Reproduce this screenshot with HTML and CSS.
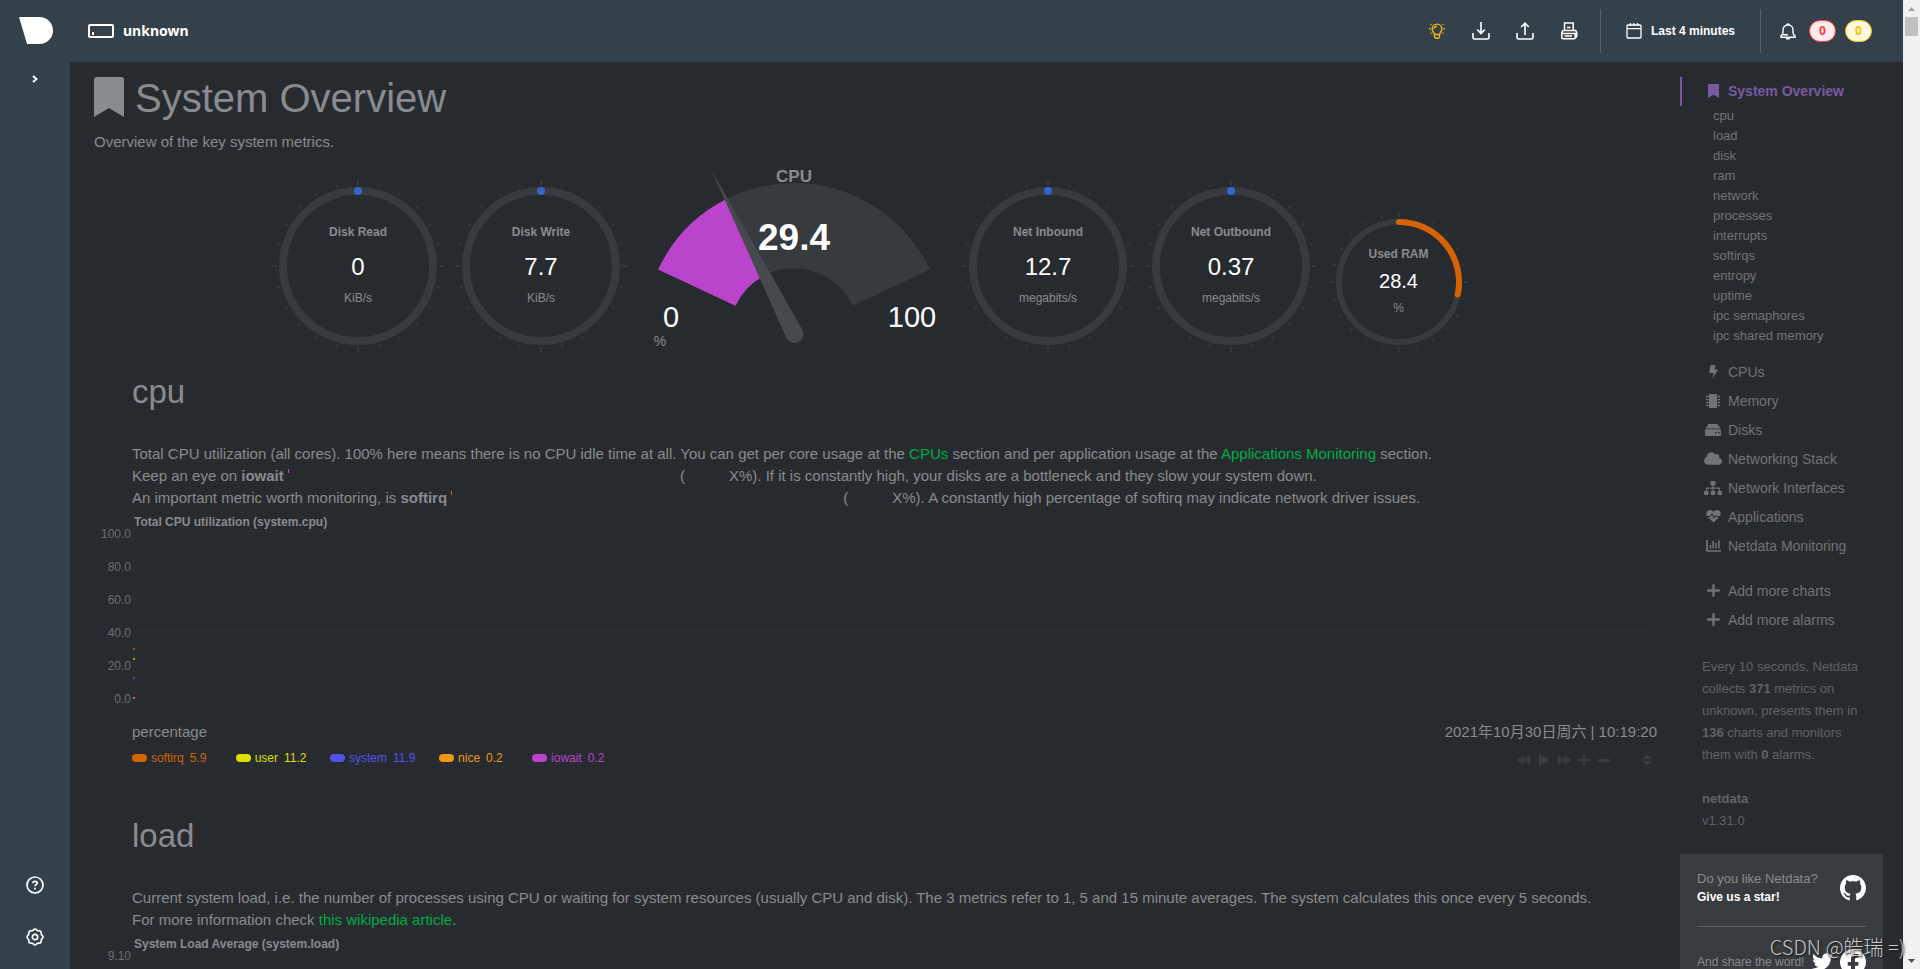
FILE: index.html
```html
<!DOCTYPE html>
<html lang="en">
<head>
<meta charset="utf-8">
<title>unknown netdata dashboard</title>
<link rel="stylesheet" href="styles.css">
</head>
<body>
<svg class="defs" width="0" height="0" aria-hidden="true">
  <defs>
    <symbol id="bookmark" viewBox="0 0 30 40"><path d="M3 0h24a3 3 0 0 1 3 3v37l-15-9-15 9V3a3 3 0 0 1 3-3z"/></symbol>
    <symbol id="plus" viewBox="0 0 448 448"><path d="M416 184H264V32c0-18-14-32-32-32h-16c-18 0-32 14-32 32v152H32c-18 0-32 14-32 32v16c0 18 14 32 32 32h152v152c0 18 14 32 32 32h16c18 0 32-14 32-32V264h152c18 0 32-14 32-32v-16c0-18-14-32-32-32z"/></symbol>
    <symbol id="ring" viewBox="0 0 172 172">
      <circle cx="86" cy="86" r="75" fill="none" stroke="#373a3f" stroke-width="8"/>
      <circle cx="86" cy="86" r="83" fill="none" stroke="#373b3f" stroke-width="3" pathLength="240" stroke-dasharray="0.7 9.3" stroke-dashoffset="0.35"/>
      <path d="M86 0v5M86 167v5M0 86h5M167 86h5" stroke="#373b3f" stroke-width="1.500"/>
      <circle cx="86" cy="11" r="4" fill="#3366cc"/>
    </symbol>
  </defs>
</svg>
<div class="app">
  <nav class="rail" aria-label="Workspace">
    <a class="logo" href="#" aria-label="Netdata"><svg width="34" height="27" viewBox="0 0 34 27"><path fill="#fff" d="M0 0h20.500a13.500 13.500 0 0 1 0 27H8z"/></svg></a>
    <button class="icon-btn expand" aria-label="Expand"><svg width="6" height="8" viewBox="0 0 6 8"><path d="M1 1l3.500 3L1 7" fill="none" stroke="#fff" stroke-width="2"/></svg></button>
    <div class="rail-bottom">
      <button class="icon-btn" aria-label="Help"><svg width="18" height="18" viewBox="0 0 18 18" fill="none" stroke="#fff" stroke-width="1.700"><circle cx="9" cy="9" r="8"/><path d="M6.800 7.200C7 5.800 8 5.300 9 5.300s2.200.6 2.200 1.900C11.200 8.600 9 8.700 9 10.300M9 11.800v1.600"/></svg></button>
      <button class="icon-btn" aria-label="Settings"><svg width="18" height="18" viewBox="0 0 18 18" fill="none" stroke="#fff" stroke-width="1.700"><path d="M9 1c1.300 0 1.600 1.400 2.700 1.700 1 .3 2.100-.4 3 .6.900.9.200 2 .6 3C15.600 7.400 17 7.700 17 9s-1.400 1.600-1.700 2.700c-.4 1 .3 2.100-.6 3-.9.900-2 .2-3 .6C10.600 15.600 10.300 17 9 17s-1.600-1.400-2.700-1.700c-1-.4-2.100.3-3-.6-.9-.9-.2-2-.6-3C2.400 10.600 1 10.300 1 9s1.400-1.600 1.700-2.700c.4-1-.3-2.100.6-3 .9-1 2-.3 3-.6C7.400 2.400 7.700 1 9 1z"/><circle cx="9" cy="9" r="2.700"/></svg></button>
    </div>
  </nav>
  <div class="stage">
    <header class="topbar">
      <div class="host"><svg width="26" height="14" viewBox="0 0 26 14"><rect x="1" y="1" width="24" height="12" rx="1" fill="none" stroke="#fff" stroke-width="2"/><path d="M4 8h2v3H4z" fill="#fff"/></svg><span>unknown</span></div>
      <div class="tools">
        <button class="icon-btn" aria-label="News"><svg width="18" height="18" viewBox="0 0 18 18" fill="none" stroke="#f0b80c" stroke-width="1.400"><path d="M6.500 12.500C6.500 11 4.200 10 4.200 6.900a4.800 4.800 0 0 1 9.600 0c0 3.100-2.300 4.100-2.300 5.600z"/><path d="M6.500 12.500v2.300l1 1.500h3l1-1.500v-2.300M6.300 6.800c0-1.500 1-2.500 2.500-2.600M2.500 2l1 .8M15.500 2l-1 .8M1 6.800h1.500M15.500 6.800H17M2.500 11.500l1-.8M15.500 11.500l-1-.8"/></svg></button>
        <button class="icon-btn" aria-label="Import"><svg width="18" height="18" viewBox="0 0 18 18" fill="none" stroke="#fff" stroke-width="1.600"><path d="M9 0v11M5.200 7.500L9 11.500l3.800-4M1 11v4.500A1.500 1.500 0 0 0 2.500 17h13a1.500 1.500 0 0 0 1.500-1.500V11"/></svg></button>
        <button class="icon-btn" aria-label="Export"><svg width="18" height="18" viewBox="0 0 18 18" fill="none" stroke="#fff" stroke-width="1.600"><path d="M9 13V1.500M5.200 5L9 1.200 12.800 5M1 11v4.500A1.500 1.500 0 0 0 2.500 17h13a1.500 1.500 0 0 0 1.500-1.500V11"/></svg></button>
        <button class="icon-btn" aria-label="Print"><svg width="18" height="18" viewBox="0 0 18 18" fill="none" stroke="#fff" stroke-width="1.500"><path d="M4.500 8.500V1h8.700v7.500zM7 5.500h3.500M4.500 8.500H3L1.800 10.500v5.300a1 1 0 0 0 1 1h11.400a1 1 0 0 0 1-1v-4.300H1.800M4.500 14h7.500M13.200 8.500h2.500l1 2v4l-1.500 1.500"/></svg></button>
      </div>
      <button class="range"><svg width="16" height="16" viewBox="0 0 16 16" fill="none" stroke="#fff" stroke-width="1.300"><rect x="1" y="2" width="14" height="13" rx="1"/><path d="M1 5.700h14M4.500 0v3M8 0v3M11.500 0v3"/></svg><span>Last 4 minutes</span></button>
      <div class="alarms">
        <button class="icon-btn" aria-label="Alarms"><svg width="16" height="17" viewBox="0 0 16 17" fill="none" stroke="#fff" stroke-width="1.400"><path d="M1 14.300v-1.500c1.300-.8 2-1.500 2-3.300V7c0-2.700 2-5 5-5s5 2.300 5 5v2.500c0 1.800.7 2.500 2 3.300v1.500zM6.500 2.200C6.500.600 9.500.600 9.500 2.200M6 14.500c.5 2 3.500 2 4 0M3 11.700h5"/></svg></button>
        <button class="pill critical">0</button>
        <button class="pill warning">0</button>
      </div>
    </header>
    <div class="body">
      <main class="content">
        <h1><svg width="30" height="40"><use href="#bookmark"/></svg>System Overview</h1>
        <p class="lead">Overview of the key system metrics.</p>
        <div class="gauges">
          <div class="pie"><svg viewBox="0 0 172 172"><use href="#ring"/></svg><b>Disk Read</b><span class="num">0</span><span class="unit">KiB/s</span></div>
          <div class="pie"><svg viewBox="0 0 172 172"><use href="#ring"/></svg><b>Disk Write</b><span class="num">7.7</span><span class="unit">KiB/s</span></div>
          <div class="cpu-gauge">
            <svg width="324" height="198" viewBox="1 0 324 198">
              <path fill="#373a3e" d="M26.100 115.600A150 150 0 0 1 297.900 115.600L220.500 151.700A64.500 64.500 0 0 0 103.500 151.700Z"/>
              <path fill="#bb44cc" d="M26.100 115.600A150 150 0 0 1 94.400 45.100L132.900 121.400A64.500 64.500 0 0 0 103.500 151.700Z"/>
              <path fill="#464a4e" d="M79.200 15.800L170 175a9 9 0 1 1-16 8z"/>
              <g font-family="Liberation Sans, Arial, sans-serif" text-anchor="middle">
                <text x="162" y="28" font-size="17" font-weight="bold" fill="#888b8f">CPU</text>
                <text x="162" y="96" font-size="37" font-weight="bold" fill="#fff">29.4</text>
                <text x="39" y="173" font-size="29" fill="#fff">0</text>
                <text x="280" y="173" font-size="29" fill="#fff">100</text>
                <text x="28" y="192" font-size="14" fill="#888b8f">%</text>
              </g>
            </svg>
          </div>
          <div class="pie"><svg viewBox="0 0 172 172"><use href="#ring"/></svg><b>Net Inbound</b><span class="num">12.7</span><span class="unit">megabits/s</span></div>
          <div class="pie"><svg viewBox="0 0 172 172"><use href="#ring"/></svg><b>Net Outbound</b><span class="num">0.37</span><span class="unit">megabits/s</span></div>
          <div class="pie small">
            <svg viewBox="0 0 140 140"><circle cx="70" cy="70" r="60" fill="none" stroke="#373a3f" stroke-width="6"/><circle cx="70" cy="70" r="67" fill="none" stroke="#373b3f" stroke-width="3" pathLength="240" stroke-dasharray="0.8 9.2" stroke-dashoffset="0.4"/><path d="M70 0v5M70 135v5M0 70h5M135 70h5" stroke="#373b3f" stroke-width="1.500"/><path d="M70 10A60 60 0 0 1 128.700 82.500" fill="none" stroke="#d66300" stroke-width="6" stroke-linecap="round"/></svg>
            <b>Used RAM</b><span class="num">28.4</span><span class="unit">%</span>
          </div>
        </div>

        <section class="block">
          <h2>cpu</h2>
          <p>Total CPU utilization (all cores). 100% here means there is no CPU idle time at all. You can get per core usage at the <a href="#">CPUs</a> section and per application usage at the <a href="#">Applications Monitoring</a> section.<br>Keep an eye on <b>iowait</b> <span class="spark iowait"></span>(<span class="pct"></span>X%). If it is constantly high, your disks are a bottleneck and they slow your system down.<br>An important metric worth monitoring, is <b>softirq</b> <span class="spark softirq"></span>(<span class="pct"></span>X%). A constantly high percentage of softirq may indicate network driver issues.</p>
          <h3>Total CPU utilization (system.cpu)</h3>
          <div class="chart">
            <div class="axis"><span>100.0</span><span>80.0</span><span>60.0</span><span>40.0</span><span>20.0</span><span>0.0</span></div>
            <div class="plot">
              <i></i><i></i><i></i><i></i><i></i><i></i>
              <svg class="points" width="2" height="168"><path fill="#a8550f" d="M0 117h2v2H0z"/><path fill="#a5a80c" d="M0 127h2v2H0z"/><path fill="#4a4cb8" d="M0 146h2v2H0z"/><path fill="#c35a80" d="M0 166h2v2H0z"/></svg>
            </div>
          </div>
          <div class="meta"><span>percentage</span><time>2021年10月30日周六 | 10:19:20</time></div>
          <div class="foot">
            <ul class="legend">
              <li class="c-softirq"><span>softirq</span><em>5.9</em></li>
              <li class="c-user"><span>user</span><em>11.2</em></li>
              <li class="c-system"><span>system</span><em>11.9</em></li>
              <li class="c-nice"><span>nice</span><em>0.2</em></li>
              <li class="c-iowait"><span>iowait</span><em>0.2</em></li>
            </ul>
            <div class="toolbox">
              <button class="icon-btn" aria-label="Pan left"><svg width="14" height="12" viewBox="0 0 14 12"><path d="M7 1v10L0 6zM13 1v10L6 6z"/></svg></button>
              <button class="icon-btn" aria-label="Play"><svg width="14" height="12" viewBox="0 0 14 12"><path d="M2 0l11 6-11 6z"/></svg></button>
              <button class="icon-btn" aria-label="Pan right"><svg width="14" height="12" viewBox="0 0 14 12"><path d="M1 1v10l7-5zM7 1v10l7-5z"/></svg></button>
              <button class="icon-btn" aria-label="Zoom in"><svg width="14" height="12"><use href="#plus"/></svg></button>
              <button class="icon-btn" aria-label="Zoom out"><svg width="14" height="12" viewBox="0 0 14 12"><rect x="1" y="5" width="12" height="3" rx="1"/></svg></button>
              <button class="icon-btn resize" aria-label="Resize"><svg width="10" height="12" viewBox="0 0 10 12"><path d="M0 5l5-5 5 5zM0 7h10l-5 5z"/></svg></button>
            </div>
          </div>
        </section>

        <section class="block second">
          <h2>load</h2>
          <p>Current system load, i.e. the number of processes using CPU or waiting for system resources (usually CPU and disk). The 3 metrics refer to 1, 5 and 15 minute averages. The system calculates this once every 5 seconds.<br>For more information check <a href="#">this wikipedia article</a>.</p>
          <h3>System Load Average (system.load)</h3>
          <div class="chart">
            <div class="axis"><span>9.10</span></div>
            <div class="plot"><i></i></div>
          </div>
        </section>
      </main>

      <aside class="side">
        <a class="active" href="#"><span class="ico"><svg width="11" height="14" viewBox="0 0 30 40" preserveAspectRatio="none"><path d="M3 0h24a3 3 0 0 1 3 3v37l-15-9-15 9V3a3 3 0 0 1 3-3z"/></svg></span>System Overview</a>
        <ul class="sub">
          <li><a href="#">cpu</a></li><li><a href="#">load</a></li><li><a href="#">disk</a></li><li><a href="#">ram</a></li><li><a href="#">network</a></li><li><a href="#">processes</a></li><li><a href="#">interrupts</a></li><li><a href="#">softirqs</a></li><li><a href="#">entropy</a></li><li><a href="#">uptime</a></li><li><a href="#">ipc semaphores</a></li><li><a href="#">ipc shared memory</a></li>
        </ul>
        <ul class="menu">
          <li><a href="#"><span class="ico"><svg width="9" height="14" viewBox="0 0 9 14"><path d="M1.500 0h5L5.300 4.500H9L3.300 14l1.300-6H.300z"/></svg></span>CPUs</a></li>
          <li><a href="#"><span class="ico"><svg width="14" height="14" viewBox="0 0 14 14"><rect x="3" width="8" height="14" rx="1"/><path d="M0 2.500h2.500M0 5.500h2.500M0 8.500h2.500M0 11.500h2.500M11.500 2.500H14M11.500 5.500H14M11.500 8.500H14M11.500 11.500H14" stroke="currentColor" stroke-width="1.500"/></svg></span>Memory</a></li>
          <li><a href="#"><span class="ico"><svg width="16" height="12" viewBox="0 0 16 12"><path d="M3.600 0h8.800L15.800 4.500H.200zM1 5.300h14a1 1 0 0 1 1 1V11a1 1 0 0 1-1 1H1a1 1 0 0 1-1-1V6.300a1 1 0 0 1 1-1zM10 8v1.500h1.500V8zm3 0v1.500h1.500V8z" fill-rule="evenodd"/></svg></span>Disks</a></li>
          <li><a href="#"><span class="ico"><svg width="18" height="13" viewBox="0 0 640 448"><path d="M537.600 194.600c4-10.700 6.400-22.400 6.400-34.600 0-53-43-96-96-96-19.700 0-38.100 6-53.300 16.200C367 32.200 315.300 0 256 0 167.600 0 96 71.600 96 160c0 2.700.1 5.400.2 8.100C40.200 187.800 0 241.200 0 304c0 79.500 64.500 144 144 144h368c70.700 0 128-57.300 128-128 0-61.900-44-113.600-102.400-125.400z"/></svg></span>Networking Stack</a></li>
          <li><a href="#"><span class="ico"><svg width="18" height="14" viewBox="0 0 18 14"><rect x="6.500" width="5" height="4.500" rx="1"/><rect y="10" width="4.500" height="4" rx="1"/><rect x="6.700" y="10" width="4.500" height="4" rx="1"/><rect x="13.500" y="10" width="4.500" height="4" rx="1"/><path d="M9 4v6M2.500 10V7.200h13V10" fill="none" stroke="currentColor" stroke-width="1.200"/></svg></span>Network Interfaces</a></li>
          <li><a href="#"><span class="ico"><svg width="15" height="13" viewBox="0 0 15 13"><path d="M7.500 12.500L1.500 6.800C0 5.300 0 2.800 1 1.500 2.700-.4 5.500-.4 7 1.200l.5.600.5-.6c1.500-1.600 4.300-1.600 6 .3 1 1.300 1 3.800-.5 5.300z"/><path d="M1 6.500h3.500L6 3.700l2 4.500 1.500-3 .8 1.300H14" fill="none" stroke="#272b30"/></svg></span>Applications</a></li>
          <li><a href="#"><span class="ico"><svg width="15" height="12" viewBox="0 0 15 12" fill="none" stroke="currentColor"><path d="M1 0v11h14" stroke-width="1.700"/><path d="M4.500 5v3.500M7.200 1v7.500M10 3v5.500M13 .5v8" stroke-width="1.600"/></svg></span>Netdata Monitoring</a></li>
        </ul>
        <ul class="menu more">
          <li><a href="#"><span class="ico"><svg width="13" height="13"><use href="#plus"/></svg></span>Add more charts</a></li>
          <li><a href="#"><span class="ico"><svg width="13" height="13"><use href="#plus"/></svg></span>Add more alarms</a></li>
        </ul>
        <p class="info">Every 10 seconds, Netdata collects <b>371</b> metrics on unknown, presents them in <b>136</b> charts and monitors them with <b>0</b> alarms.</p>
        <p class="info"><b>netdata</b><br>v1.31.0</p>
        <div class="share">
          <div class="share-row star">
            <div>Do you like Netdata?<br><a href="#">Give us a star!</a></div>
            <a href="#" aria-label="GitHub"><svg width="26" height="26" viewBox="0 0 16 16"><path d="M8 0C3.580 0 0 3.580 0 8c0 3.540 2.290 6.530 5.470 7.590.4.070.55-.17.55-.38 0-.19-.01-.82-.01-1.490-2.010.37-2.530-.49-2.690-.94-.09-.23-.48-.94-.82-1.130-.28-.15-.68-.52-.01-.53.63-.01 1.080.58 1.230.82.72 1.210 1.870.87 2.330.66.07-.52.28-.87.51-1.070-1.780-.2-3.640-.89-3.640-3.950 0-.87.31-1.590.82-2.150-.08-.2-.36-1.020.08-2.120 0 0 .67-.21 2.200.82.64-.18 1.320-.27 2-.27s1.360.09 2 .27c1.530-1.040 2.200-.82 2.200-.82.44 1.100.16 1.920.08 2.120.51.56.82 1.270.82 2.150 0 3.070-1.870 3.750-3.650 3.950.29.25.54.73.54 1.480 0 1.070-.01 1.930-.01 2.200 0 .21.15.46.55.38A8.010 8.010 0 0 0 16 8c0-4.420-3.580-8-8-8z"/></svg></a>
          </div>
          <div class="share-row word">
            <span>And share the word!</span>
            <a href="#" aria-label="Twitter"><svg width="21" height="18" viewBox="0 0 24 20"><path d="M24 2.400c-.9.400-1.800.700-2.800.800 1-.6 1.800-1.600 2.200-2.700-1 .6-2 1-3.100 1.200A4.900 4.900 0 0 0 11.900 6C7.700 5.900 4.100 3.900 1.700.900.400 3.100 1 6 3.200 7.500c-.8 0-1.600-.2-2.200-.6 0 2.300 1.600 4.400 3.900 4.900-.7.200-1.500.2-2.200.1.600 2 2.400 3.400 4.600 3.400A9.900 9.900 0 0 1 0 17.300a14 14 0 0 0 21.500-12.400c1-.7 1.800-1.600 2.500-2.500z"/></svg></a>
            <a href="#" aria-label="Facebook"><svg width="26" height="26" viewBox="0 0 24 24"><path d="M24 12a12 12 0 1 0-13.900 11.900v-8.400H7.100V12h3V9.400c0-3 1.800-4.700 4.500-4.700 1.300 0 2.700.2 2.700.2v3h-1.500c-1.500 0-2 .9-2 1.900V12h3.400l-.5 3.500h-2.800v8.400A12 12 0 0 0 24 12z"/></svg></a>
          </div>
        </div>
      </aside>
    </div>
  </div>
  <div class="scrollbar" aria-hidden="true">
    <svg width="7" height="4"><path d="M0 4h7L3.500 0z" fill="#a3a3a3"/></svg>
    <div class="thumb"></div>
    <svg width="7" height="4"><path d="M0 0h7L3.500 4z" fill="#505050"/></svg>
  </div>
  <div class="watermark">CSDN @皓瑞 =)</div>
</div>
</body>
</html>
```
FILE: styles.css
```css
* { box-sizing: border-box; }
body {
  margin: 0;
  background: #272b30;
  color: #888b8f;
  font: 15px/22px "Liberation Sans", Arial, "Noto Sans CJK SC", sans-serif;
}
a { color: inherit; text-decoration: none; }
ul { list-style: none; margin: 0; padding: 0; }
svg { display: block; flex: none; }
.defs { position: absolute; }
.app { position: relative; display: flex; height: 100vh; overflow: hidden; }

.icon-btn {
  display: flex;
  align-items: center;
  justify-content: center;
  padding: 0;
  border: 0;
  background: none;
  color: inherit;
}

.rail {
  flex: none;
  width: 70px;
  padding: 17px 0 23px;
  background: #35414a;
  display: flex;
  flex-direction: column;
  align-items: center;
}
.logo { margin-left: 2px; }
.expand { margin-top: 31px; }
.rail-bottom { margin-top: auto; display: grid; gap: 34px; }

.stage { flex: 1; min-width: 0; display: flex; flex-direction: column; }
.topbar {
  flex: none;
  height: 62px;
  padding: 0 31px 0 18px;
  background: #35414a;
  color: #fff;
  display: flex;
  align-items: center;
}
.host {
  display: flex;
  align-items: center;
  gap: 9px;
  margin-right: auto;
  font: bold 14px/20px "Noto Sans", sans-serif;
}
.tools { display: flex; gap: 26px; padding-right: 22px; }
.range {
  display: flex;
  align-items: center;
  gap: 9px;
  height: 44px;
  padding: 0 25px;
  border: solid #56626b;
  border-width: 0 1px;
  background: none;
  color: #fff;
  font: bold 12px/16px "Liberation Sans", Arial, sans-serif;
}
.alarms { display: flex; align-items: center; gap: 9px; padding-left: 19px; }
.alarms .icon-btn { margin-right: 4px; }
.pill {
  width: 27px;
  height: 22px;
  padding: 0;
  border: 1px solid;
  border-radius: 11px;
  font: bold 12px/20px "Noto Sans", sans-serif;
}
.critical { color: #ff4136; background: #ffebef; }
.warning { color: #ffc300; background: #fff8e1; }

.body { flex: 1; min-height: 0; display: flex; }
.content { flex: 1; min-width: 0; padding: 15px 23px 0 24px; }
h1, h2, h3, p { margin: 0; font-weight: normal; }
h1 {
  display: flex;
  align-items: flex-start;
  gap: 11px;
  height: 42px;
  font-size: 40px;
  line-height: 42px;
  fill: #888b8f;
}
.lead { padding-top: 12px; }

.gauges {
  display: flex;
  justify-content: center;
  align-items: flex-end;
  height: 199px;
  padding-right: 10px;
}
.pie {
  position: relative;
  width: 183px;
  height: 172px;
  display: flex;
  flex-direction: column;
  align-items: center;
  padding-top: 44px;
  font-size: 12px;
  line-height: 16px;
}
.pie svg { position: absolute; top: 0; width: 172px; height: 172px; }
.pie .num { margin: 13px 0 9px; font-size: 24px; line-height: 28px; color: #fff; }
.pie.small { width: 152px; height: 140px; padding-top: 34px; }
.pie.small svg { width: 140px; height: 140px; }
.pie.small .num { margin: 8px 0; font-size: 20px; line-height: 22px; }
.cpu-gauge { width: 324px; }

.block { padding-left: 38px; padding-top: 22px; }
.block.second { padding-top: 52px; }
h2 { font-size: 33px; line-height: 36px; margin-bottom: 33px; }
p a { color: #00ab44; }
.spark { display: inline-block; width: 392px; height: 12px; }
.spark::before { content: ""; display: block; width: 1px; height: 4px; }
.iowait::before { background: #bb44cc; }
.softirq::before { background: #d66300; }
.pct { display: inline-block; width: 44px; }
h3 {
  margin-top: 4px;
  padding-left: 2px;
  font-size: 12px;
  line-height: 18px;
  font-weight: bold;
}

.chart { display: flex; margin-left: -38px; }
.axis {
  width: 39px;
  margin-top: -5px;
  padding-right: 2px;
  display: flex;
  flex-direction: column;
  gap: 17px;
  text-align: right;
  font-size: 12px;
  line-height: 16px;
  color: #6b6e72;
}
.plot {
  position: relative;
  flex: 1;
  margin: 0 5px 8px 0;
  border-left: 1px solid #283236;
  display: flex;
  flex-direction: column;
  justify-content: space-between;
}
.plot i { height: 1px; background: #283236; }
.points { position: absolute; left: -1px; top: 0; }

.meta { display: flex; justify-content: space-between; margin-top: 14px; }
.foot { display: flex; justify-content: space-between; padding-top: 6px; }
.legend { display: flex; gap: 18px; font-size: 12px; line-height: 16px; }
.legend li { display: flex; align-items: center; }
.legend li::before {
  content: "";
  width: 15px;
  height: 8px;
  margin-right: 4px;
  border-radius: 4px;
  background: currentColor;
}
.legend em { font-style: normal; min-width: 28px; margin-left: 6px; }
.c-softirq { color: #d66300; }
.c-user { color: #dddd00; }
.c-system { color: #5054e6; }
.c-nice { color: #ee9911; }
.c-iowait { color: #bb44cc; }
.toolbox { display: flex; gap: 6px; padding: 5px 5px 0 0; color: #393c41; fill: currentColor; }
.resize { margin-left: 25px; }

.side {
  flex: none;
  width: 223px;
  padding: 15px 20px 0 0;
  color: #727374;
  fill: currentColor;
  font-size: 14px;
}
.side .ico { width: 30px; display: flex; justify-content: center; flex: none; }
.side .active {
  display: flex;
  align-items: center;
  height: 29px;
  padding: 0 0 2px 16px;
  border-left: 2px solid #785aa0;
  color: #785aa0;
  font-weight: bold;
}
.sub { padding-left: 33px; font-size: 13px; line-height: 20px; }
.menu { padding: 11px 0 0 18px; }
.menu a { display: flex; align-items: center; height: 29px; }
.menu.more { padding-top: 16px; }
.info { padding: 22px 20px 0 22px; font-size: 13px; color: #606264; }
.share {
  margin-top: 22px;
  padding: 16px 17px;
  background: #383b40;
  color: #888b8f;
  font-size: 12px;
  line-height: 18px;
}
.share a { color: #fff; fill: #fff; font-weight: bold; }
.share-row { display: flex; align-items: center; justify-content: space-between; }
.star { padding-bottom: 20px; border-bottom: 1px solid #5e6165; }
.star div { font-size: 13px; }
.star div a { font-size: 12px; }
.word { padding-top: 22px; }

.scrollbar {
  flex: none;
  width: 17px;
  background: #f1f1f1;
  display: flex;
  flex-direction: column;
  align-items: center;
  padding: 7px 0 6px;
}
.thumb { width: 13px; height: 19px; margin: 6px 0 auto; background: #c1c1c1; }
.watermark {
  position: absolute;
  right: 15px;
  bottom: 8px;
  color: #c8c9ca;
  font: 300 20px/28px "Noto Sans CJK SC", sans-serif;
  text-shadow: 1px 1px 2px #111;
}
```
